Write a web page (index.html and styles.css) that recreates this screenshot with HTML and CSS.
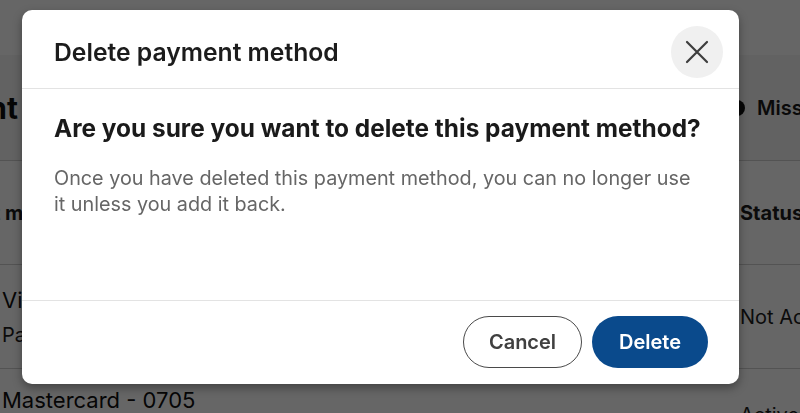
FILE: index.html
```html
<!DOCTYPE html>
<html lang="en">
<head>
<meta charset="utf-8">
<title>Delete payment method</title>
<link rel="stylesheet" href="styles.css">
</head>
<body>
<div class="page">
  <header class="topbar"></header>
  <section class="summary">
    <div class="clip-left title-clip"><h1 class="page-title">Payment</h1></div>
    <div class="status-note"><span class="dot"></span>Missing info</div>
  </section>
  <div class="table">
    <div class="trow thead">
      <div class="head-main">
        <div class="clip-left head-clip"><span>Payment&nbsp;</span></div>
        <span>method</span>
      </div>
      <div class="cell-status">Status</div>
    </div>
    <div class="trow">
      <div class="cell-main row-main">
        <div class="card-name">Visa - 1234</div>
        <div class="card-sub">Payment</div>
      </div>
      <div class="cell-status">Not Active</div>
    </div>
    <div class="trow last-row">
      <div class="cell-main row-main"><div class="card-name">Mastercard - 0705</div></div>
      <div class="cell-status">Active</div>
    </div>
  </div>
</div>

<div class="overlay"></div>

<div class="modal" role="dialog" aria-labelledby="modal-title">
  <div class="modal-header">
    <h2 id="modal-title" class="modal-title">Delete payment method</h2>
    <button class="close-btn" aria-label="Dismiss">
      <svg width="24" height="24" viewBox="0 0 24 24" aria-hidden="true">
        <path d="M2 2 L22 22 M22 2 L2 22" stroke="#3d3d3d" stroke-width="2.2" stroke-linecap="round" fill="none"/>
      </svg>
    </button>
  </div>
  <div class="modal-body">
    <h3 class="question">Are you sure you want to delete this payment method?</h3>
    <p class="explain">Once you have deleted this payment method, you can no longer use it unless you add it back.</p>
  </div>
  <div class="modal-footer">
    <button class="btn btn-secondary">Cancel</button>
    <button class="btn btn-primary">Delete</button>
  </div>
</div>
</body>
</html>
```

FILE: styles.css
```css
* { box-sizing: border-box; }

html, body {
  margin: 0;
  padding: 0;
  width: 800px;
  height: 413px;
  overflow: hidden;
}

body {
  font-family: Inter, "Noto Sans", "Liberation Sans", sans-serif;
  color: #1d1d1d;
  background: #ffffff;
}

/* Underlying page */
.page {
  width: 800px;
}

.topbar {
  height: 55px;
  background: #ffffff;
}

.summary {
  height: 105px;
  background: #f4f4f4;
  display: flex;
  align-items: center;
  justify-content: space-between;
  overflow: hidden;
}

/* right-aligned box whose content overflows to the left edge */
.clip-left {
  display: flex;
  justify-content: flex-end;
  white-space: nowrap;
}

.title-clip {
  width: 18px;
}

.head-main {
  display: flex;
  white-space: nowrap;
}

.head-clip {
  width: 5px;
}

.page-title {
  margin: 0;
  font-size: 30px;
  font-weight: 700;
  color: #111;
}

.status-note {
  display: flex;
  align-items: center;
  gap: 12px;
  margin-right: -114px;
  font-size: 20px;
  font-weight: 600;
  color: #1a1a1a;
  white-space: nowrap;
  width: 185px;
}

.dot {
  width: 16px;
  height: 16px;
  border-radius: 50%;
  background: #111;
}

.table {
  border-top: 1px solid #d0d0d0;
}

.trow {
  display: flex;
  justify-content: space-between;
  align-items: center;
  height: 104px;
  border-bottom: 1px solid #d0d0d0;
  overflow: hidden;
}

.thead {
  font-weight: 700;
  font-size: 20px;
}

.cell-main {
  white-space: nowrap;
}

.row-main {
  margin-left: 2px;
}

.cell-status {
  width: 60px;
  white-space: nowrap;
  font-size: 20px;
}

.card-name {
  font-size: 22px;
  color: #111;
}

.card-sub {
  font-size: 20px;
  margin-top: 10px;
}

.last-row {
  align-items: flex-start;
}

.last-row .row-main {
  padding-top: 18px;
}

.last-row .cell-status {
  padding-top: 34px;
}

/* Overlay */
.overlay {
  position: fixed;
  inset: 0;
  background: rgba(0, 0, 0, 0.6);
}

/* Modal */
.modal {
  position: absolute;
  left: 22px;
  top: 10px;
  width: 717px;
  background: #ffffff;
  border-radius: 10px;
  box-shadow: 0 4px 10px rgba(0, 0, 0, 0.35);
  display: flex;
  flex-direction: column;
}

.modal-header {
  display: flex;
  align-items: center;
  justify-content: space-between;
  padding: 16px 16px 10px 32px;
  border-bottom: 1px solid #e3e3e3;
}

.modal-title {
  margin: 0;
  font-size: 24.7px;
  font-weight: 600;
  color: #1c1c1c;
}

.close-btn {
  width: 52px;
  height: 52px;
  border: none;
  border-radius: 50%;
  background: #f0f0f0;
  display: flex;
  align-items: center;
  justify-content: center;
  padding: 0;
}

.modal-body {
  padding: 23px 32px 0 32px;
  min-height: 211px;
}

.question {
  margin: 0;
  font-size: 24.4px;
  line-height: 32px;
  font-weight: 700;
  color: #1a1a1a;
  white-space: nowrap;
}

.explain {
  margin: 21px 0 0 0;
  font-size: 19.8px;
  line-height: 26px;
  color: #666666;
  max-width: 645px;
}

.modal-footer {
  display: flex;
  justify-content: flex-end;
  gap: 10px;
  padding: 15px 31px 16px 32px;
  border-top: 1px solid #e3e3e3;
}

.btn {
  height: 52px;
  border-radius: 26px;
  font-family: inherit;
  font-size: 20px;
  font-weight: 600;
  padding: 0 20px;
}

.btn-secondary {
  width: 119px;
  background: #ffffff;
  border: 1.5px solid #4a4a4a;
  color: #404040;
}

.btn-primary {
  width: 116px;
  background: #0a4a8c;
  border: none;
  color: #ffffff;
}
```
